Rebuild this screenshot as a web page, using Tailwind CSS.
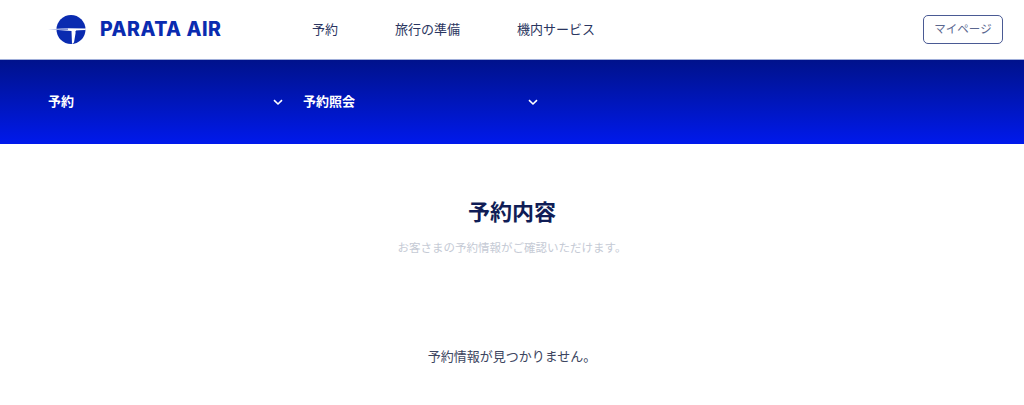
<!DOCTYPE html>
<html lang="ja">
<head>
    <meta charset="UTF-8">
    <meta name="viewport" content="width=device-width, initial-scale=1.0">
    <title>PARATA AIR</title>
    <script src="https://cdn.jsdelivr.net/npm/@tailwindcss/browser@4"></script>
</head>
<body class="bg-white font-['Inter','Noto_Sans_CJK_JP',sans-serif] overflow-hidden">
    <header class="h-[60px] flex items-center pl-[48px] pr-[21px] border-b border-[#9fadd9]">
        <a class="flex items-center w-[264px]" href="#">
            <svg class="w-[42px] h-[32px] shrink-0" viewBox="0 0 42 32">
                <circle cx="23" cy="15.5" r="14.5" fill="#0a2bb0"/>
                <path d="M0 15.2 L20 14.2 L38 14.6 L37.6 16 L28 16.4 L26 28.5 L24 30 L23.5 17 Z" fill="#fff"/>
                <path d="M0 15.4 L20 14.8 L20 15.6 Z" fill="#0a2bb0"/>
                <path d="M27.5 17 L36.5 16.5 L29.5 26.5 Z" fill="#0a2bb0"/>
            </svg>
            <span class="ml-[10px] text-[19.5px] leading-none font-extrabold text-[#0a2bb0] tracking-[0.5px] whitespace-nowrap">PARATA AIR</span>
        </a>
        <nav class="flex gap-[57px] text-[13px] text-[#2a3560]">
            <a href="#">予約</a>
            <a href="#">旅行の準備</a>
            <a href="#">機内サービス</a>
        </nav>
        <button class="ml-auto w-[80px] h-[29px] border border-[#4a5a94] rounded-[5px] text-[11.5px] text-[#5a678f] bg-white">マイページ</button>
    </header>
    <section class="h-[84px] bg-gradient-to-b from-[#00128c] to-[#0019ec] flex items-center pl-[48px] text-white text-[13px] font-bold">
        <div class="w-[255px] flex items-center justify-between pr-[20px]">
            <span>予約</span>
            <svg class="w-[10px] h-[7px]" viewBox="0 0 10 7" fill="none" stroke="#fff" stroke-width="1.6"><path d="M1 1.2 L5 5 L9 1.2"/></svg>
        </div>
        <div class="w-[235px] flex items-center justify-between">
            <span>予約照会</span>
            <svg class="w-[10px] h-[7px]" viewBox="0 0 10 7" fill="none" stroke="#fff" stroke-width="1.6"><path d="M1 1.2 L5 5 L9 1.2"/></svg>
        </div>
    </section>
    <main class="flex flex-col items-center">
        <h1 class="mt-[52px] text-[22px] leading-[32px] font-bold text-[#101d56]">予約内容</h1>
        <p class="mt-[11px] text-[11.5px] leading-[18px] text-[#c5cad5]">お客さまの予約情報がご確認いただけます。</p>
        <p class="mt-[89px] text-[13px] leading-[20px] text-[#3c4560]">予約情報が見つかりません。</p>
    </main>
</body>
</html>
